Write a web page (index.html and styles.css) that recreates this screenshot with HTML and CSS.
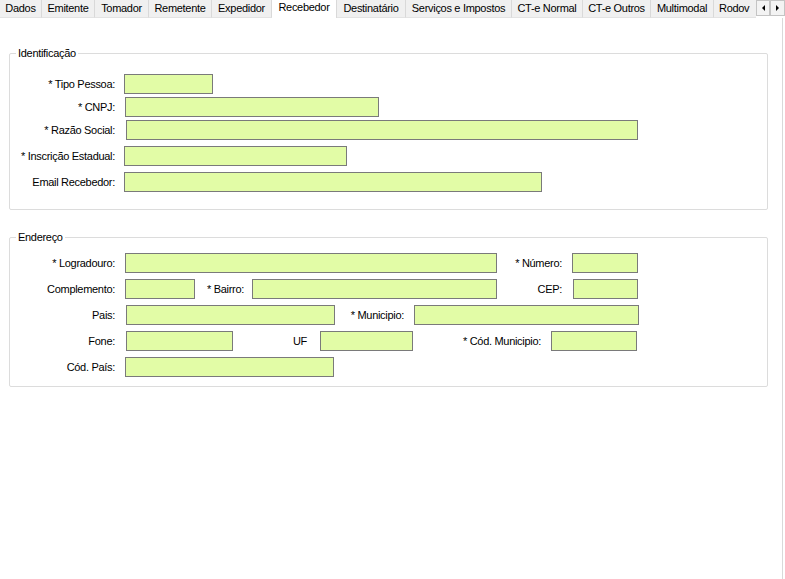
FILE: index.html
```html
<!DOCTYPE html>
<html lang="pt-BR">
<head>
    <meta charset="UTF-8">
    <title>CT-e - Recebedor</title>
    <link rel="stylesheet" href="styles.css">
</head>
<body>
    <div class="tab-control">
        <div class="tab-header">
            <div class="tab-strip">
                <div class="tab">Dados</div>
                <div class="tab">Emitente</div>
                <div class="tab">Tomador</div>
                <div class="tab">Remetente</div>
                <div class="tab">Expedidor</div>
                <div class="tab active">Recebedor</div>
                <div class="tab">Destinatário</div>
                <div class="tab">Serviços e Impostos</div>
                <div class="tab">CT-e Normal</div>
                <div class="tab">CT-e Outros</div>
                <div class="tab">Multimodal</div>
                <div class="tab">Rodov</div>
            </div>
            <div class="scroll-btn"><span class="arrow-left"></span></div>
            <div class="scroll-btn"><span class="arrow-right"></span></div>
        </div>

        <div class="tab-page">
            <fieldset class="group identificacao">
                <legend>Identificação</legend>
                <div class="row">
                    <label class="lbl">* Tipo Pessoa:</label>
                    <input class="field in-tipo" type="text">
                </div>
                <div class="row">
                    <label class="lbl">* CNPJ:</label>
                    <input class="field in-cnpj" type="text">
                </div>
                <div class="row">
                    <label class="lbl">* Razão Social:</label>
                    <input class="field in-razao" type="text">
                </div>
                <div class="row row-wide">
                    <label class="lbl">* Inscrição Estadual:</label>
                    <input class="field in-ie" type="text">
                </div>
                <div class="row row-wide">
                    <label class="lbl">Email Recebedor:</label>
                    <input class="field in-email" type="text">
                </div>
            </fieldset>

            <fieldset class="group endereco">
                <legend>Endereço</legend>
                <div class="row">
                    <label class="lbl">* Logradouro:</label>
                    <input class="field in-logradouro" type="text">
                    <label class="lbl-mid lbl-numero">* Número:</label>
                    <input class="field in-numero" type="text">
                </div>
                <div class="row">
                    <label class="lbl">Complemento:</label>
                    <input class="field in-complemento" type="text">
                    <label class="lbl-mid lbl-bairro">* Bairro:</label>
                    <input class="field in-bairro" type="text">
                    <label class="lbl-mid lbl-cep">CEP:</label>
                    <input class="field in-cep" type="text">
                </div>
                <div class="row">
                    <label class="lbl">Pais:</label>
                    <input class="field in-pais" type="text">
                    <label class="lbl-mid lbl-municipio">* Municipio:</label>
                    <input class="field in-municipio" type="text">
                </div>
                <div class="row">
                    <label class="lbl">Fone:</label>
                    <input class="field in-fone" type="text">
                    <label class="lbl-mid lbl-uf">UF</label>
                    <input class="field in-uf" type="text">
                    <label class="lbl-mid lbl-codmun">* Cód. Municipio:</label>
                    <input class="field in-codmun" type="text">
                </div>
                <div class="row">
                    <label class="lbl">Cód. País:</label>
                    <input class="field in-codpais" type="text">
                </div>
            </fieldset>
        </div>
    </div>
</body>
</html>
```

FILE: styles.css
```css
* {
    margin: 0;
    padding: 0;
    box-sizing: border-box;
}

body {
    font-family: "Liberation Sans", Arial, sans-serif;
    font-size: 11px;
    letter-spacing: -0.3px;
    color: #000;
    background: #fff;
    width: 785px;
    height: 579px;
    overflow: hidden;
}

/* Abas */
.tab-header {
    display: flex;
    height: 18px;
}

.tab-strip {
    display: flex;
    width: 756px;
    overflow: hidden;
}

.tab {
    flex: none;
    height: 18px;
    line-height: 17px;
    text-align: center;
    white-space: nowrap;
    background: #f0f0f0;
    border-right: 1px solid #d9d9d9;
    border-bottom: 1px solid #e3e3e3;
}

.tab:nth-child(1) { width: 42px; }
.tab:nth-child(2) { width: 53px; }
.tab:nth-child(3) { width: 54px; }
.tab:nth-child(4) { width: 63px; }
.tab:nth-child(5) { width: 60px; }
.tab:nth-child(6) { width: 65px; }
.tab:nth-child(7) { width: 69px; }
.tab:nth-child(8) { width: 106px; }
.tab:nth-child(9) { width: 71px; }
.tab:nth-child(10) { width: 68px; }
.tab:nth-child(11) { width: 63px; }
.tab:nth-child(12) { width: 42px; text-align: left; padding-left: 5px; border-right: none; }

.tab.active {
    background: #fff;
    line-height: 15px;
    border-bottom: none;
}

.scroll-btn {
    width: 14px;
    height: 16px;
    background: #f3f3f3;
    border: 1px solid #c4c4c4;
    display: flex;
    align-items: center;
    justify-content: center;
}

.scroll-btn + .scroll-btn {
    width: 15px;
}

.arrow-left {
    width: 0;
    height: 0;
    border-top: 3px solid transparent;
    border-bottom: 3px solid transparent;
    border-right: 3px solid #000;
}

.arrow-right {
    width: 0;
    height: 0;
    border-top: 3px solid transparent;
    border-bottom: 3px solid transparent;
    border-left: 3px solid #000;
}

/* Página */
.tab-page {
    width: 783px;
    height: 561px;
    border-right: 1px solid #d9d9d9;
    padding: 29px 0 0 9px;
}

.group {
    width: 759px;
    border: 1px solid #dcdcdc;
    border-radius: 2px;
}

.group legend {
    margin-left: 6px;
    padding: 0 2px;
    line-height: 13px;
}

.identificacao {
    padding: 14px 0 17px 0;
}

.endereco {
    margin-top: 21px;
    padding: 9px 0 9px 0;
}

.identificacao .row + .row {
    margin-top: 3px;
}

.identificacao .row.row-wide {
    margin-top: 6px;
}

.endereco .row + .row {
    margin-top: 6px;
}

.row {
    display: flex;
    align-items: center;
    height: 20px;
}

.lbl {
    width: 114px;
    padding-right: 9px;
    text-align: right;
    white-space: nowrap;
}

.endereco .lbl {
    width: 115px;
    padding-right: 10px;
}

.lbl-mid {
    text-align: right;
    white-space: nowrap;
}

.field {
    height: 20px;
    border: 1px solid #7a7a7a;
    background: #e2fca6;
    outline: none;
}

/* Identificação */
.in-tipo { width: 89px; }
.in-cnpj { width: 254px; margin-left: 1px; }
.in-razao { width: 512px; margin-left: 2px; }
.in-ie { width: 223px; }
.in-email { width: 418px; }

/* Endereço */
.in-logradouro { width: 372px; }
.lbl-numero { width: 75px; padding-right: 10px; }
.in-numero { width: 66px; }

.in-complemento { width: 70px; }
.lbl-bairro { width: 57px; padding-right: 8px; }
.in-bairro { width: 245px; }
.lbl-cep { width: 76px; padding-right: 11px; }
.in-cep { width: 65px; }

.in-pais { width: 209px; margin-left: 1px; }
.lbl-municipio { width: 79px; padding-right: 10px; }
.in-municipio { width: 225px; }

.in-fone { width: 107px; margin-left: 1px; }
.lbl-uf { width: 87px; padding-right: 13px; }
.in-uf { width: 93px; }
.lbl-codmun { width: 138px; padding-right: 10px; }
.in-codmun { width: 86px; }

.in-codpais { width: 209px; }
```
